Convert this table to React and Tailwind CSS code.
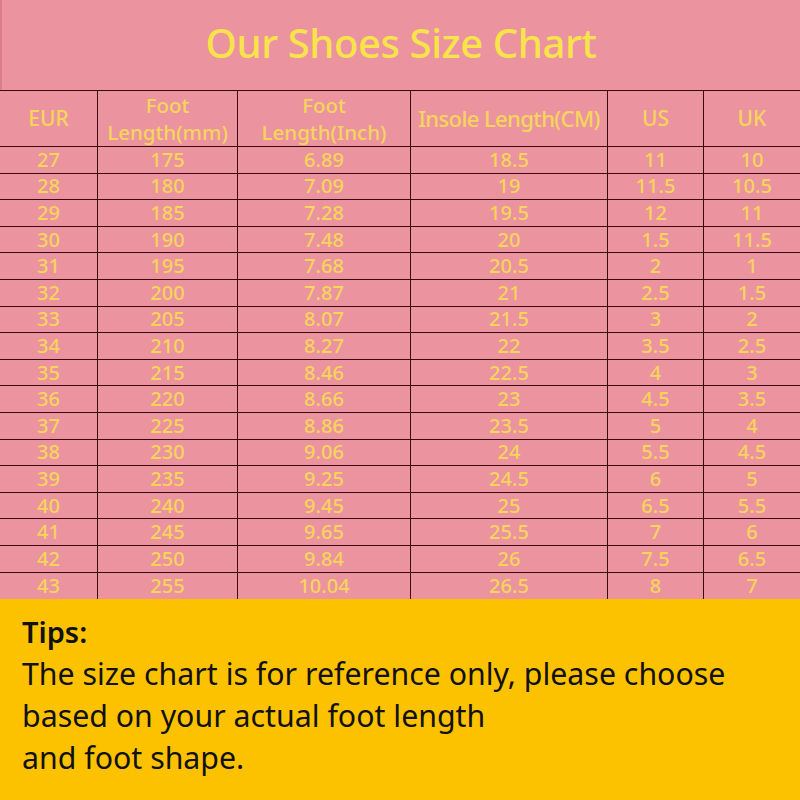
import React from 'react';

const rows = [
  ['27', '175', '6.89', '18.5', '11', '10'],
  ['28', '180', '7.09', '19', '11.5', '10.5'],
  ['29', '185', '7.28', '19.5', '12', '11'],
  ['30', '190', '7.48', '20', '1.5', '11.5'],
  ['31', '195', '7.68', '20.5', '2', '1'],
  ['32', '200', '7.87', '21', '2.5', '1.5'],
  ['33', '205', '8.07', '21.5', '3', '2'],
  ['34', '210', '8.27', '22', '3.5', '2.5'],
  ['35', '215', '8.46', '22.5', '4', '3'],
  ['36', '220', '8.66', '23', '4.5', '3.5'],
  ['37', '225', '8.86', '23.5', '5', '4'],
  ['38', '230', '9.06', '24', '5.5', '4.5'],
  ['39', '235', '9.25', '24.5', '6', '5'],
  ['40', '240', '9.45', '25', '6.5', '5.5'],
  ['41', '245', '9.65', '25.5', '7', '6'],
  ['42', '250', '9.84', '26', '7.5', '6.5'],
  ['43', '255', '10.04', '26.5', '8', '7'],
];

const cols = 'grid grid-cols-[98px_140px_173px_197px_96px_96px]';

const App = () => {
  return (
    <div className="w-[800px] h-[800px] flex flex-col bg-[#eb94a0] font-['Noto_Sans','Open_Sans',sans-serif]">
      {/* Title */}
      <div className="h-[90px] flex items-center justify-center border-l-2 border-[#d97d8a]">
        <h1 className="text-[40px] font-medium text-[#f8e34a] tracking-[-0.4px] pb-1">Our Shoes Size Chart</h1>
      </div>

      {/* Size table */}
      <div className="border-t border-[#3a0a12] text-[#f6d55a] font-medium">
        <div className={`${cols} h-[56px] border-b border-[#3a0a12] text-[20.5px] leading-[27px]`}>
          <div className="flex items-center justify-center border-r border-[#3a0a12] text-[21px]">EUR</div>
          <div className="flex flex-col items-center justify-center border-r border-[#3a0a12] whitespace-nowrap">
            <span>Foot</span>
            <span>Length(mm)</span>
          </div>
          <div className="flex flex-col items-center justify-center border-r border-[#3a0a12] whitespace-nowrap">
            <span>Foot</span>
            <span>Length(Inch)</span>
          </div>
          <div className="flex items-center justify-center border-r border-[#3a0a12] text-[22px] tracking-[-0.6px] whitespace-nowrap">Insole Length(CM)</div>
          <div className="flex items-center justify-center border-r border-[#3a0a12] text-[21px]">US</div>
          <div className="flex items-center justify-center text-[21px]">UK</div>
        </div>
        {rows.map((r) => (
          <div key={r[0]} className={`${cols} h-[26.6px] border-b border-[#3a0a12] last:border-b-0 text-[20px] leading-none`}>
            {r.map((v, i) => (
              <div
                key={i}
                className={`flex items-center justify-center ${i < 5 ? 'border-r border-[#3a0a12]' : ''}`}
              >
                {v}
              </div>
            ))}
          </div>
        ))}
      </div>

      {/* Tips */}
      <div className="flex-1 bg-[#fcc200] px-[22px] pt-[12px] text-[#111] text-[30.3px] leading-[42px]">
        <p className="font-semibold text-[29px]">Tips:</p>
        <p>The size chart is for reference only, please choose</p>
        <p>based on your actual foot length</p>
        <p>and foot shape.</p>
      </div>
    </div>
  );
};

export default App;
